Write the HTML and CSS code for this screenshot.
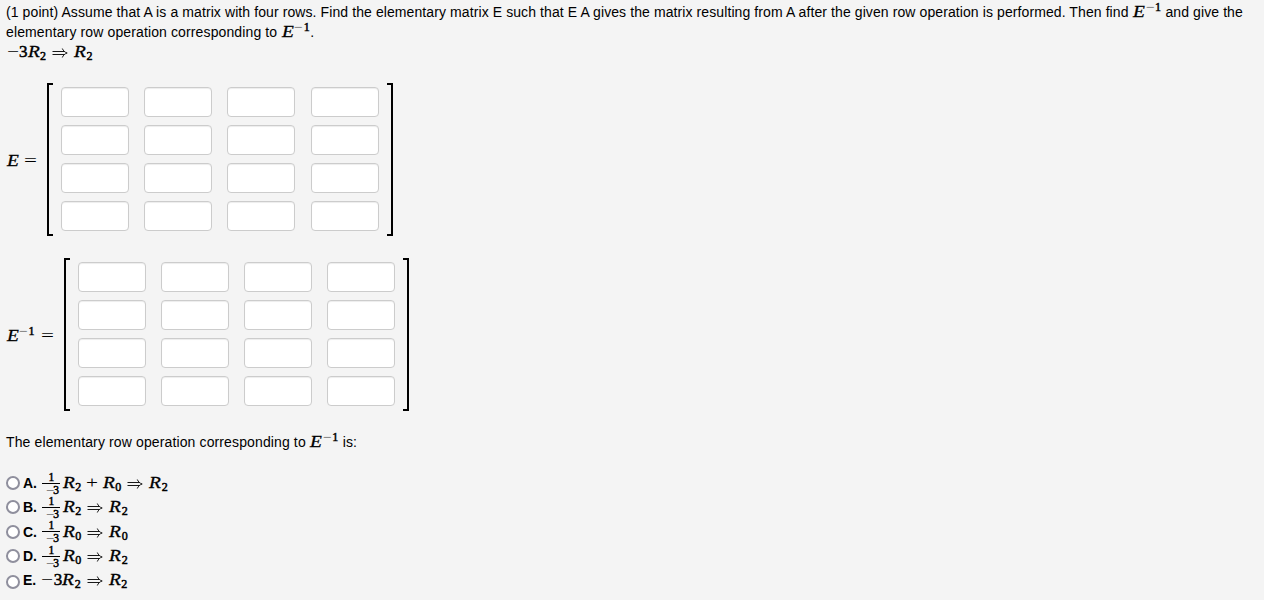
FILE: index.html
```html
<!DOCTYPE html>
<html lang="en">
<head>
  <meta charset="UTF-8" />
  <title>Elementary Matrices</title>
  <meta name="viewport" content="width=device-width, initial-scale=1.0"/>
  <link rel="stylesheet" href="styles.css">
</head>
<body>
  <svg class="defs" width="0" height="0">
    <symbol id="implies" viewBox="0 0 16 10">
      <path d="M0.5 3.5H12.5M0.5 6.5H12.5M10.3 0.5C11.3 2.8 12.8 4.3 15.2 5C12.8 5.7 11.3 7.2 10.3 9.5" fill="none" stroke="currentColor" stroke-width="0.9"/>
    </symbol>
  </svg>

  <form class="problem">
    <p class="question">(1 point) Assume that A is a matrix with four rows. Find the elementary matrix E such that E A gives the matrix resulting from A after the given row operation is performed. Then find <span class="math"><i>E</i><sup><s>−</s>1</sup></span> and give the <span class="wide">elementary row operation corresponding to</span> <span class="math"><i>E</i><sup><s>−</s>1</sup></span>.</p>
    <div class="operation"><span class="math"><b class="minus">−</b><b>3</b><i>R</i><sub>2</sub><svg class="implies"><use href="#implies"/></svg><i>R</i><sub>2</sub></span></div>

    <div class="equation">
      <span class="math name"><i>E</i><b class="equals">=</b></span>
      <div class="matrix">
        <input type="text"><input type="text"><input type="text"><input type="text">
        <input type="text"><input type="text"><input type="text"><input type="text">
        <input type="text"><input type="text"><input type="text"><input type="text">
        <input type="text"><input type="text"><input type="text"><input type="text">
      </div>
    </div>

    <div class="equation inverse">
      <span class="math name"><i>E</i><sup><s>−</s>1</sup><b class="equals">=</b></span>
      <div class="matrix">
        <input type="text"><input type="text"><input type="text"><input type="text">
        <input type="text"><input type="text"><input type="text"><input type="text">
        <input type="text"><input type="text"><input type="text"><input type="text">
        <input type="text"><input type="text"><input type="text"><input type="text">
      </div>
    </div>

    <p class="prompt"><span class="wide">The elementary row operation corresponding to</span> <span class="math"><i>E</i><sup><s>−</s>1</sup></span> is:</p>

    <div class="choices">
      <label><input type="radio" name="op"><strong>A.</strong>
        <span class="math"><span class="frac"><span>1</span><span><s>−</s>3</span></span><i>R</i><sub>2</sub><b class="plus">+</b><i>R</i><sub>0</sub><svg class="implies"><use href="#implies"/></svg><i>R</i><sub>2</sub></span></label>
      <label><input type="radio" name="op"><strong>B.</strong>
        <span class="math"><span class="frac"><span>1</span><span><s>−</s>3</span></span><i>R</i><sub>2</sub><svg class="implies"><use href="#implies"/></svg><i>R</i><sub>2</sub></span></label>
      <label><input type="radio" name="op"><strong>C.</strong>
        <span class="math"><span class="frac"><span>1</span><span><s>−</s>3</span></span><i>R</i><sub>0</sub><svg class="implies"><use href="#implies"/></svg><i>R</i><sub>0</sub></span></label>
      <label><input type="radio" name="op"><strong>D.</strong>
        <span class="math"><span class="frac"><span>1</span><span><s>−</s>3</span></span><i>R</i><sub>0</sub><svg class="implies"><use href="#implies"/></svg><i>R</i><sub>2</sub></span></label>
      <label class="plain"><input type="radio" name="op"><strong>E.</strong>
        <span class="math"><b class="minus">−</b><b>3</b><i>R</i><sub>2</sub><svg class="implies"><use href="#implies"/></svg><i>R</i><sub>2</sub></span></label>
    </div>
  </form>
</body>
</html>
```
FILE: styles.css
```css
* {
  box-sizing: border-box;
}
body {
  margin: 0;
  background-color: #f4f4f4;
  color: #000;
  font-family: "Liberation Sans", Arial, sans-serif;
  font-size: 14px;
  line-height: 20px;
  overflow: hidden;
}
.defs {
  display: block;
}
.problem {
  padding: 2px 6px 0;
}
p {
  margin: 0;
  letter-spacing: 0.094px;
}
.wide {
  letter-spacing: 0.125px;
}
.operation {
  height: 20px;
  line-height: 19px;
}
.operation .math {
  margin-top: 1px;
}

/* math */
.math {
  display: inline-flex;
  align-items: baseline;
  height: 18px;
  padding-left: 0.5px;
  line-height: 18px;
  font-family: "Liberation Serif", "Times New Roman", serif;
  font-size: 17px;
  letter-spacing: 0;
  white-space: nowrap;
  -webkit-text-stroke: 0.3px #000;
}
p .math {
  margin-right: -0.6px;
}
.math i {
  width: 12.5px;
  transform: scaleX(1.14);
  transform-origin: left;
}
.math b {
  width: 8.5px;
  font-weight: normal;
  -webkit-text-stroke: 0.5px #000;
}
.math s {
  text-decoration: none;
  display: inline-block;
  width: 9.5px;
  transform: scaleX(1.3);
  transform-origin: left;
  color: #444;
  -webkit-text-stroke: 0;
}
.math sup,
.math sub {
  position: relative;
  font-size: 12px;
  line-height: 12px;
  vertical-align: baseline;
  -webkit-text-stroke: 0.5px #000;
}
.math sup {
  top: -6px;
  width: 16.5px;
}
.math sub {
  top: 3px;
  width: 6px;
}
.math .minus,
.math .plus,
.math .equals {
  width: 12.5px;
  transform: scaleX(1.25);
  transform-origin: left;
  -webkit-text-stroke: 0;
}
.math .plus {
  width: 17px;
  margin-left: 4.5px;
}
.math .equals {
  margin-left: 5px;
  transform: scaleX(1.35);
}
.implies {
  width: 16px;
  height: 10px;
  margin: 0 6px;
  align-self: center;
  position: relative;
  top: 1px;
}
.frac {
  display: inline-flex;
  flex-direction: column;
  width: 18px;
  margin-right: 2.5px;
  align-self: center;
  font-size: 11.5px;
  line-height: 12px;
  text-align: center;
  -webkit-text-stroke: 0.5px #000;
}
.frac > span:first-child {
  border-bottom: 1px solid #000;
}

/* matrices */
.equation {
  display: flex;
  align-items: center;
  height: 153px;
  margin-top: 21px;
}
.equation.inverse {
  margin-top: 22px;
}
.name {
  width: 40.8px;
  margin-top: 2px;
}
.inverse .name {
  width: 57.6px;
}
.matrix {
  position: relative;
  display: grid;
  grid-template-columns: repeat(4, 68px);
  align-content: start;
  gap: 8px 15.25px;
  height: 153px;
  padding: 4px 14px;
}
.matrix::before,
.matrix::after {
  content: "";
  position: absolute;
  top: 0;
  bottom: 0;
  width: 4px;
  border: solid #000;
}
.matrix::before {
  left: 0;
  border-width: 2px 0 2px 2px;
}
.matrix::after {
  right: 0;
  border-width: 2px 2px 2px 0;
}
.matrix input {
  width: 68px;
  height: 30px;
  border: 1px solid #ccc;
  border-radius: 4px;
  background: #fff;
  box-shadow: inset 0 1px 1px rgba(0, 0, 0, 0.075);
}

/* answers */
.prompt {
  margin-top: 21px;
}
.choices {
  margin-top: 19px;
}
.choices label {
  display: flex;
  align-items: center;
  height: 24.3px;
}
.choices input {
  appearance: none;
  width: 14px;
  height: 14px;
  margin: 0 3px 0 0;
  border: 2px solid #8f8f9d;
  border-radius: 50%;
  background: #fff;
}
.choices strong {
  width: 19.3px;
}
.choices .math {
  padding-left: 0;
}
.choices .plain .math {
  margin: -1px 0 0 -1px;
}
.choices .plain input {
  margin-top: 3px;
}
```
